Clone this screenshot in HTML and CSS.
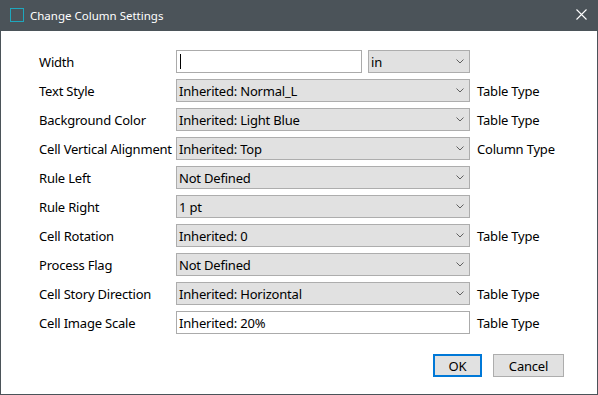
FILE: index.html
```html
<!DOCTYPE html>
<html>
<head>
<meta charset="utf-8">
<link rel="stylesheet" href="styles.css">
</head>
<body>
<div class="window">
  <div class="titlebar">
    <span class="app-icon"></span>
    <span class="title">Change Column Settings</span>
    <svg class="close" width="11" height="11" viewBox="0 0 11 11"><path d="M0.5 0.5 L10.5 10.5 M10.5 0.5 L0.5 10.5" stroke="#ffffff" stroke-width="1.1" fill="none"/></svg>
  </div>
  <div class="content">
    <div class="form">
      <div class="label">Width</div>
      <div class="width-row">
        <div class="textbox wide"><span class="caret"></span></div>
        <div class="combo unit"><span class="val">in</span><svg class="chev" width="8" height="5" viewBox="0 0 8 5"><path d="M0.5 0.5 L4 4 L7.5 0.5" stroke="#606060" fill="none"/></svg></div>
      </div>
      <div class="note"></div>

      <div class="label">Text Style</div>
      <div class="combo"><span class="val">Inherited: Normal_L</span><svg class="chev" width="8" height="5" viewBox="0 0 8 5"><path d="M0.5 0.5 L4 4 L7.5 0.5" stroke="#606060" fill="none"/></svg></div>
      <div class="note">Table Type</div>

      <div class="label">Background Color</div>
      <div class="combo"><span class="val">Inherited: Light Blue</span><svg class="chev" width="8" height="5" viewBox="0 0 8 5"><path d="M0.5 0.5 L4 4 L7.5 0.5" stroke="#606060" fill="none"/></svg></div>
      <div class="note">Table Type</div>

      <div class="label">Cell Vertical Alignment</div>
      <div class="combo"><span class="val">Inherited: Top</span><svg class="chev" width="8" height="5" viewBox="0 0 8 5"><path d="M0.5 0.5 L4 4 L7.5 0.5" stroke="#606060" fill="none"/></svg></div>
      <div class="note">Column Type</div>

      <div class="label">Rule Left</div>
      <div class="combo"><span class="val">Not Defined</span><svg class="chev" width="8" height="5" viewBox="0 0 8 5"><path d="M0.5 0.5 L4 4 L7.5 0.5" stroke="#606060" fill="none"/></svg></div>
      <div class="note"></div>

      <div class="label">Rule Right</div>
      <div class="combo"><span class="val">1 pt</span><svg class="chev" width="8" height="5" viewBox="0 0 8 5"><path d="M0.5 0.5 L4 4 L7.5 0.5" stroke="#606060" fill="none"/></svg></div>
      <div class="note"></div>

      <div class="label">Cell Rotation</div>
      <div class="combo"><span class="val">Inherited: 0</span><svg class="chev" width="8" height="5" viewBox="0 0 8 5"><path d="M0.5 0.5 L4 4 L7.5 0.5" stroke="#606060" fill="none"/></svg></div>
      <div class="note">Table Type</div>

      <div class="label">Process Flag</div>
      <div class="combo"><span class="val">Not Defined</span><svg class="chev" width="8" height="5" viewBox="0 0 8 5"><path d="M0.5 0.5 L4 4 L7.5 0.5" stroke="#606060" fill="none"/></svg></div>
      <div class="note"></div>

      <div class="label">Cell Story Direction</div>
      <div class="combo"><span class="val">Inherited: Horizontal</span><svg class="chev" width="8" height="5" viewBox="0 0 8 5"><path d="M0.5 0.5 L4 4 L7.5 0.5" stroke="#606060" fill="none"/></svg></div>
      <div class="note">Table Type</div>

      <div class="label">Cell Image Scale</div>
      <div class="textbox"><span class="val">Inherited: 20%</span></div>
      <div class="note">Table Type</div>
    </div>
    <div class="buttons">
      <div class="btn ok">OK</div>
      <div class="btn cancel">Cancel</div>
    </div>
  </div>
</div>
</body>
</html>
```
FILE: styles.css
```css
html, body {
  margin: 0;
  padding: 0;
  background: #ffffff;
}
body {
  font-family: "Noto Sans", "Open Sans", sans-serif;
  font-size: 13px;
  letter-spacing: -0.2px;
  color: #000000;
}
.window {
  width: 598px;
  height: 395px;
  box-sizing: border-box;
  border: 1px solid #4b5359;
  border-top: none;
  display: flex;
  flex-direction: column;
  background: #ffffff;
}
.titlebar {
  height: 31px;
  background: #4b5359;
  display: flex;
  align-items: center;
  color: #ffffff;
  flex-shrink: 0;
  margin: 0 -1px;
  padding: 0 11px 0 10px;
}
.app-icon {
  width: 12px;
  height: 12px;
  border: 1px solid #1ea7bd;
  margin-top: -2px;
  flex-shrink: 0;
}
.title {
  margin-left: 6px;
  font-size: 11.5px;
  letter-spacing: 0;
  flex: 1;
  margin-top: -1px;
}
.close {
  margin-top: -2px;
}
.content {
  flex: 1;
  display: flex;
  flex-direction: column;
  padding: 19px 33px 0 38px;
}
.form {
  display: grid;
  grid-template-columns: 137px 294px auto;
  grid-auto-rows: 23px;
  row-gap: 6px;
  column-gap: 0;
}
.label {
  display: flex;
  align-items: center;
  white-space: nowrap;
}
.note {
  display: flex;
  align-items: center;
  padding-left: 7px;
  white-space: nowrap;
}
.width-row {
  display: flex;
  gap: 6px;
}
.textbox {
  box-sizing: border-box;
  border: 1px solid #ababab;
  background: #ffffff;
  display: flex;
  align-items: center;
  padding-left: 2px;
}
.textbox.wide {
  width: 186px;
}
.caret {
  width: 1px;
  height: 15px;
  background: #000000;
  margin-left: 1px;
}
.combo {
  box-sizing: border-box;
  border: 1px solid #adadad;
  background: #e1e1e1;
  display: flex;
  align-items: center;
  padding-left: 2px;
  padding-right: 5px;
}
.combo.unit {
  flex: 1;
}
.val {
  flex: 1;
  white-space: nowrap;
}
.chev {
  flex-shrink: 0;
}
.buttons {
  display: flex;
  justify-content: flex-end;
  gap: 11px;
  margin-top: 20px;
}
.btn {
  box-sizing: border-box;
  height: 23px;
  background: #e1e1e1;
  border: 1px solid #adadad;
  display: flex;
  align-items: center;
  justify-content: center;
}
.btn.ok {
  width: 49px;
  border: 2px solid #0078d7;
}
.btn.cancel {
  width: 71px;
}
```
